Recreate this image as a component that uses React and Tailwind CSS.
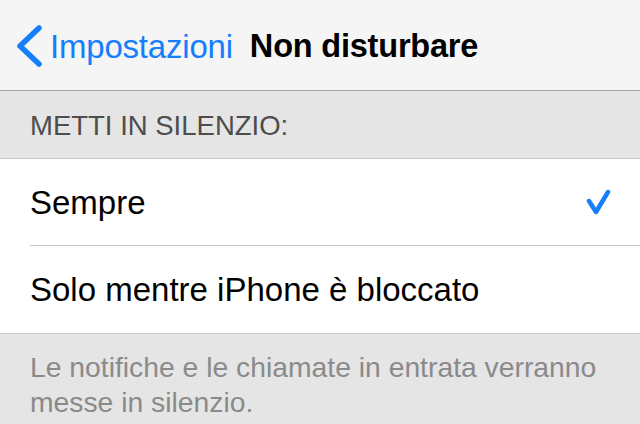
import React from "react";

export default function App() {
  const font = { fontFamily: '"Liberation Sans", Arial, sans-serif' };
  return (
    <div className="w-[640px] h-[424px] overflow-hidden bg-[#e5e5e5] flex flex-col" style={font}>
      {/* Nav bar */}
      <div className="h-[91px] shrink-0 bg-[#f5f5f5] border-b border-[#a9a9a9] flex items-center pt-[2px]">
        <svg width="30" height="44" viewBox="0 0 30 44" className="ml-[13px] shrink-0">
          <path d="M26 4 L7 22 L26 40" fill="none" stroke="#157efb" strokeWidth="5.5" strokeLinecap="round" strokeLinejoin="round" />
        </svg>
        <span className="ml-[7px] text-[33px] leading-none text-[#157efb] tracking-[-0.2px]">Impostazioni</span>
        <span className="ml-[17px] text-[32.5px] leading-none font-bold text-black tracking-[-0.2px]">Non disturbare</span>
      </div>
      {/* Section header */}
      <div className="h-[68px] shrink-0 border-b border-[#c8c8c8] flex items-center pl-[30px] pt-[3px]">
        <span className="text-[27.5px] leading-none text-[#4d4d4d]">METTI IN SILENZIO:</span>
      </div>
      {/* Rows */}
      <div className="bg-white border-b border-[#c8c8c8]">
        <div className="h-[87px] pl-[30px] flex">
          <div className="flex-1 flex items-center border-b border-[#c8c8c8] pr-[28px]">
            <span className="flex-1 text-[33px] leading-none text-black pt-[1px]">Sempre</span>
            <svg width="28" height="28" viewBox="0 0 28 28" className="shrink-0 mt-[2px]">
              <path d="M5 12 L12 23 L24 3" fill="none" stroke="#157efb" strokeWidth="4.5" strokeLinecap="round" strokeLinejoin="round" />
            </svg>
          </div>
        </div>
        <div className="h-[87px] pl-[30px] flex items-center">
          <span className="text-[33px] leading-none text-black">Solo mentre iPhone è bloccato</span>
        </div>
      </div>
      {/* Footer */}
      <div className="pl-[30px] pr-[20px] pt-[16px] text-[28.3px] leading-[35px] text-[#8a8a8a]">
        Le notifiche e le chiamate in entrata verranno messe in silenzio.
      </div>
    </div>
  );
}
